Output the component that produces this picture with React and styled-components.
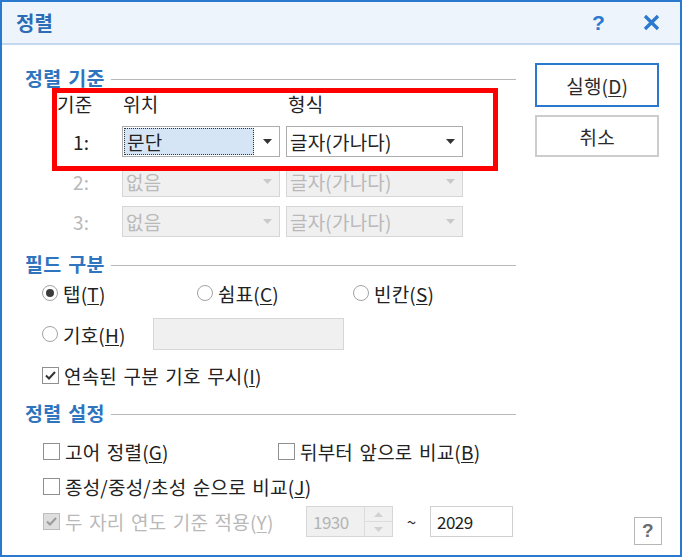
import { Fragment } from 'react';
import styled, { createGlobalStyle } from 'styled-components';

const GlobalStyle = createGlobalStyle`
  body {
    margin: 0;
    background: #ffffff;
    font-family: "Noto Sans CJK KR", "Noto Sans", sans-serif;
  }
  * { box-sizing: border-box; }
`;

const BLUE = '#2b78cf';
const TEXT = '#222222';
const DIM = '#b9b9b9';

function Arrow({ disabled }) {
  return (
    <svg width="9" height="5" viewBox="0 0 9 5">
      <path d="M0 0 L9 0 L4.5 5 Z" fill={disabled ? '#c9c9c9' : '#333'} />
    </svg>
  );
}

function Combo({ value, disabled, selected }) {
  return (
    <ComboBox $disabled={disabled}>
      {selected ? <Selection>{value}</Selection> : <ComboText>{value}</ComboText>}
      <ArrowCell><Arrow disabled={disabled} /></ArrowCell>
    </ComboBox>
  );
}

function Radio({ checked, children }) {
  return (
    <Option>
      <RadioCircle>{checked && <RadioDot />}</RadioCircle>
      <span>{children}</span>
    </Option>
  );
}

function Check({ checked, disabled, children }) {
  return (
    <Option $disabled={disabled}>
      <CheckBox $disabled={disabled}>
        {checked && (
          <svg width="11" height="9" viewBox="0 0 11 9">
            <path d="M1 4.5 L4 7.5 L10 1" fill="none" stroke={disabled ? '#9a9a9a' : '#333'} strokeWidth="2" />
          </svg>
        )}
      </CheckBox>
      <span>{children}</span>
    </Option>
  );
}

function SortDialog() {
  const rows = [
    { n: '1:', pos: '문단', fmt: '글자(가나다)', on: true },
    { n: '2:', pos: '없음', fmt: '글자(가나다)', on: false },
    { n: '3:', pos: '없음', fmt: '글자(가나다)', on: false },
  ];

  return (
    <Window>
      <TitleBar>
        <Title>정렬</Title>
        <TitleButtons>
          <TitleHelp>?</TitleHelp>
          <svg width="17" height="17" viewBox="0 0 17 17">
            <path d="M2 2 L15 15 M15 2 L2 15" stroke={BLUE} strokeWidth="3.2" />
          </svg>
        </TitleButtons>
      </TitleBar>
      <Body>
        <MainColumn>
          <SectionHeader>정렬 기준<Rule /></SectionHeader>
          <CriteriaGrid>
            <ColLabel $indent={32}>기준</ColLabel>
            <ColLabel $indent={1}>위치</ColLabel>
            <ColLabel $indent={2}>형식</ColLabel>
            {rows.map(r => (
              <Fragment key={r.n}>
                <RowLabel $disabled={!r.on}>{r.n}</RowLabel>
                <Combo value={r.pos} disabled={!r.on} selected={r.on} />
                <Combo value={r.fmt} disabled={!r.on} />
              </Fragment>
            ))}
            <Highlight />
          </CriteriaGrid>

          <SectionHeader $top={15}>필드 구분<Rule /></SectionHeader>
          <RadioRow>
            <Radio checked>탭(<u>T</u>)</Radio>
            <Radio>쉼표(<u>C</u>)</Radio>
            <Radio>빈칸(<u>S</u>)</Radio>
          </RadioRow>
          <SymbolRow>
            <SymbolOption><Radio>기호(<u>H</u>)</Radio></SymbolOption>
            <Field $width={191} $height={32} $disabled />
          </SymbolRow>
          <Row $top={11} $indent={17}>
            <Check checked>연속된 구분 기호 무시(<u>I</u>)</Check>
          </Row>

          <SectionHeader $top={12}>정렬 설정<Rule /></SectionHeader>
          <SettingsRow $top={12}>
            <Check>고어 정렬(<u>G</u>)</Check>
            <Check>뒤부터 앞으로 비교(<u>B</u>)</Check>
          </SettingsRow>
          <Row $top={7} $indent={18}>
            <Check>종성/중성/초성 순으로 비교(<u>J</u>)</Check>
          </Row>
          <YearRow>
            <YearLabel><Check checked disabled>두 자리 연도 기준 적용(<u>Y</u>)</Check></YearLabel>
            <Field $width={87} $height={31} $disabled>
              <FieldText $disabled>1930</FieldText>
              <Spinner>
                <SpinHalf>
                  <svg width="9" height="5" viewBox="0 0 9 5"><path d="M0 5 L9 5 L4.5 0 Z" fill="#d2d2d2" /></svg>
                </SpinHalf>
                <SpinHalf $bottom>
                  <svg width="9" height="5" viewBox="0 0 9 5"><path d="M0 0 L9 0 L4.5 5 Z" fill="#d2d2d2" /></svg>
                </SpinHalf>
              </Spinner>
            </Field>
            <Tilde>~</Tilde>
            <Field $width={83} $height={31}>
              <FieldText>2029</FieldText>
            </Field>
          </YearRow>
        </MainColumn>

        <SideColumn>
          <Button $primary>실행(<u>D</u>)</Button>
          <Button>취소</Button>
          <HelpBox>?</HelpBox>
        </SideColumn>
      </Body>
    </Window>
  );
}

export default function App() {
  return (
    <>
      <GlobalStyle />
      <SortDialog />
    </>
  );
}

const Window = styled.div`
  width: 682px;
  height: 557px;
  border: 2px solid ${BLUE};
  background: #ffffff;
  display: flex;
  flex-direction: column;
  color: ${TEXT};
  font-size: 19px;
  letter-spacing: 0.2px;
  word-spacing: 2px;
  overflow: hidden;
`;

const TitleBar = styled.div`
  height: 43px;
  flex-shrink: 0;
  background: #eef4fb;
  border-bottom: 2px solid #c4d9ef;
  display: flex;
  align-items: center;
  justify-content: space-between;
  padding: 0 20px 0 14px;
`;

const Title = styled.div`
  font-size: 20px;
  font-weight: 700;
  color: #2c6db6;
  line-height: 1;
`;

const TitleButtons = styled.div`
  display: flex;
  align-items: center;
  gap: 38px;
`;

const TitleHelp = styled.span`
  font-family: "Liberation Sans", Arial, sans-serif;
  font-size: 21px;
  font-weight: 700;
  color: ${BLUE};
  line-height: 1;
`;

const Body = styled.div`
  flex: 1;
  display: flex;
  padding: 0 21px 0 23px;
`;

const MainColumn = styled.div`
  width: 493px;
  padding-top: 21px;
  display: flex;
  flex-direction: column;
`;

const SectionHeader = styled.div`
  height: 24px;
  margin-top: ${p => p.$top || 0}px;
  display: flex;
  align-items: center;
  gap: 6px;
  font-size: 19.5px;
  font-weight: 700;
  letter-spacing: 0.3px;
  color: #2f74bf;
  line-height: 1;
  white-space: nowrap;
`;

const Rule = styled.div`
  flex: 1;
  height: 1px;
  background: #b8b8b8;
  margin-top: 3px;
`;

const CriteriaGrid = styled.div`
  position: relative;
  display: grid;
  grid-template-columns: 91px 158px 177px;
  grid-template-rows: 27px 31px 31px 31px;
  column-gap: 6px;
  row-gap: 9px;
`;

const ColLabel = styled.div`
  display: flex;
  align-items: center;
  padding-left: ${p => p.$indent}px;
  line-height: 1;
`;

const RowLabel = styled.div`
  display: flex;
  align-items: center;
  padding-left: 48px;
  line-height: 1;
  color: ${p => (p.$disabled ? DIM : TEXT)};
`;

const Highlight = styled.div`
  position: absolute;
  left: 27px;
  top: -2px;
  width: 446px;
  height: 83px;
  border: 5px solid #ff0000;
  pointer-events: none;
`;

const ComboBox = styled.div`
  display: flex;
  align-items: stretch;
  height: 31px;
  border: 1px solid ${p => (p.$disabled ? '#d6d6d6' : '#adadad')};
  background: ${p => (p.$disabled ? '#f0f0f0' : '#ffffff')};
  color: ${p => (p.$disabled ? DIM : TEXT)};
  line-height: 1;
  white-space: nowrap;
`;

const ComboText = styled.div`
  flex: 1;
  display: flex;
  align-items: center;
  padding-left: 3px;
`;

const Selection = styled.div`
  flex: 1;
  margin: 1px;
  display: flex;
  align-items: center;
  padding-left: 2px;
  background: #d6e5f6;
  border: 1px dotted #333;
`;

const ArrowCell = styled.div`
  width: 24px;
  display: flex;
  align-items: center;
  justify-content: center;
`;

const Option = styled.div`
  display: flex;
  align-items: center;
  gap: 5px;
  line-height: 1;
  white-space: nowrap;
  color: ${p => (p.$disabled ? DIM : TEXT)};
  u { text-underline-offset: 2px; text-decoration-thickness: 1px; }
`;

const RadioCircle = styled.div`
  width: 16px;
  height: 16px;
  border-radius: 50%;
  border: 1px solid #a3a3a3;
  background: #ffffff;
  display: flex;
  align-items: center;
  justify-content: center;
`;

const RadioDot = styled.div`
  width: 8px;
  height: 8px;
  border-radius: 50%;
  background: #3c3c3c;
`;

const CheckBox = styled.div`
  width: 17px;
  height: 17px;
  border: 1px solid ${p => (p.$disabled ? '#bdbdbd' : '#8f8f8f')};
  background: ${p => (p.$disabled ? '#dedede' : '#ffffff')};
  display: flex;
  align-items: center;
  justify-content: center;
`;

const Row = styled.div`
  height: 28px;
  margin-top: ${p => p.$top}px;
  padding-left: ${p => p.$indent}px;
  display: flex;
  align-items: center;
`;

const RadioRow = styled.div`
  height: 28px;
  margin-top: 3px;
  padding-left: 17px;
  display: grid;
  grid-template-columns: 155px 156px auto;
  align-items: center;
`;

const SymbolRow = styled.div`
  margin-top: 11px;
  padding-left: 17px;
  display: flex;
  align-items: center;
`;

const SymbolOption = styled.div`
  width: 111px;
`;

const Field = styled.div`
  width: ${p => p.$width}px;
  height: ${p => p.$height}px;
  flex-shrink: 0;
  border: 1px solid ${p => (p.$disabled ? '#d6d6d6' : '#d0d0d0')};
  background: ${p => (p.$disabled ? '#f0f0f0' : '#ffffff')};
  display: flex;
  align-items: stretch;
`;

const FieldText = styled.div`
  flex: 1;
  display: flex;
  align-items: center;
  padding-left: 6px;
  font-size: 17px;
  letter-spacing: -0.5px;
  line-height: 1;
  color: ${p => (p.$disabled ? '#b4b4b4' : '#1e1e1e')};
`;

const Spinner = styled.div`
  width: 28px;
  display: flex;
  flex-direction: column;
  border-left: 1px solid #dcdcdc;
`;

const SpinHalf = styled.div`
  flex: 1;
  display: flex;
  align-items: center;
  justify-content: center;
  border-top: ${p => (p.$bottom ? '1px solid #dcdcdc' : 'none')};
`;

const SettingsRow = styled.div`
  height: 28px;
  margin-top: ${p => p.$top}px;
  padding-left: 18px;
  display: grid;
  grid-template-columns: 235px auto;
  align-items: center;
`;

const YearRow = styled.div`
  margin-top: 6px;
  padding-left: 18px;
  display: flex;
  align-items: center;
`;

const YearLabel = styled.div`
  width: 263px;
  flex-shrink: 0;
`;

const Tilde = styled.div`
  width: 37px;
  text-align: center;
  font-size: 17px;
  color: #333;
`;

const SideColumn = styled.div`
  width: 124px;
  margin-left: 19px;
  padding: 18px 0 10px;
  display: flex;
  flex-direction: column;
  gap: 8px;
`;

const Button = styled.div`
  height: ${p => (p.$primary ? 44 : 42)}px;
  border: 2px solid ${p => (p.$primary ? BLUE : '#cccccc')};
  background: #ffffff;
  display: flex;
  align-items: center;
  justify-content: center;
  line-height: 1;
  color: #2a2a2a;
  u { text-underline-offset: 2px; text-decoration-thickness: 1px; }
`;

const HelpBox = styled.div`
  margin-top: auto;
  align-self: flex-end;
  margin-right: -3px;
  width: 28px;
  height: 28px;
  border: 1px solid #b6b6b6;
  display: flex;
  align-items: center;
  justify-content: center;
  font-family: "Liberation Sans", Arial, sans-serif;
  font-size: 19px;
  font-weight: 700;
  color: #6b6b6b;
`;
